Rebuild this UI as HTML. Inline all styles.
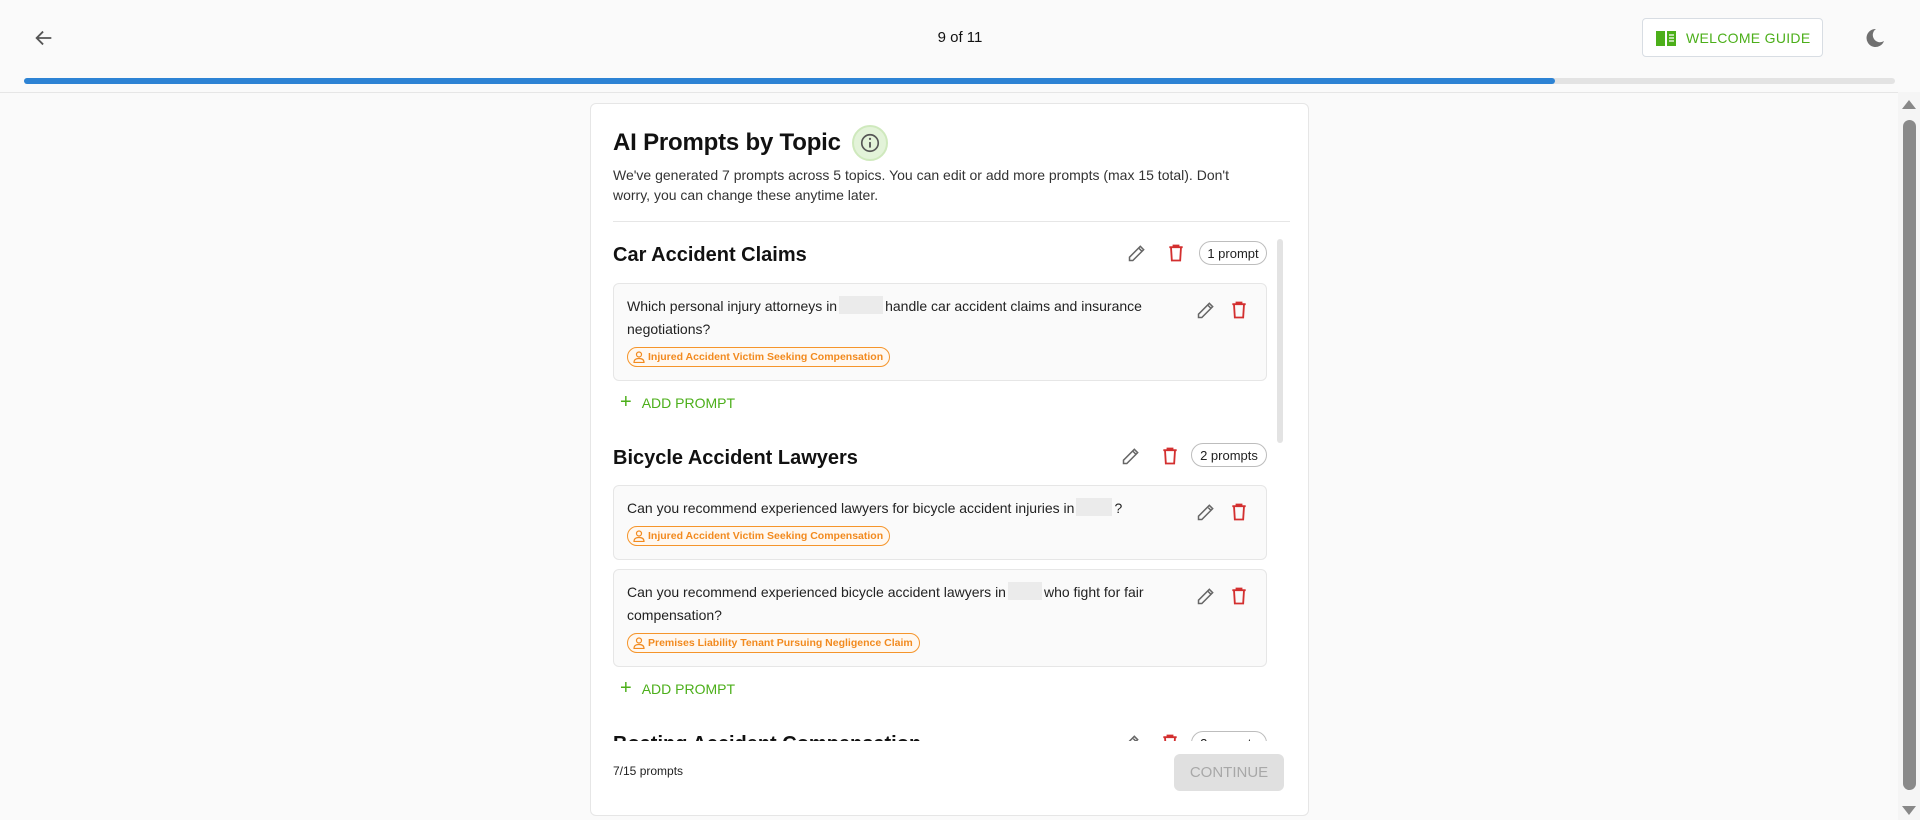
<!DOCTYPE html>
<html><head><meta charset="utf-8"><style>
*{box-sizing:border-box;margin:0;padding:0}
html,body{width:1920px;height:820px;overflow:hidden}
body{background:#fafafa;font-family:"Liberation Sans",Arial,sans-serif;color:#111;position:relative}
.abs{position:absolute}
.hdr-line{left:0;top:92px;width:1898px;height:1px;background:#e6e6e6}
.prog{left:24px;top:78px;width:1871px;height:6px;background:#e3e3e3;border-radius:3px}
.prog i{display:block;width:1531px;height:6px;background:#2d83d4;border-radius:3px}
.wg{left:1642px;top:18px;width:181px;height:39px;border:1px solid #d8dde3;border-radius:4px;background:#fff;color:#4caf1a;font-size:14px;letter-spacing:.3px;display:flex;align-items:center;padding-left:13px;gap:10px}
.card{left:590px;top:103px;width:719px;height:713px;background:#fff;border:1px solid #e6e6e6;border-radius:6px}
h1{position:absolute;left:613px;top:129px;font-size:24px;font-weight:bold;letter-spacing:-.2px}
.desc{left:613px;top:165px;width:645px;font-size:14px;line-height:20px;color:#333}
.hr{left:613px;top:221px;width:677px;height:1px;background:#e6e6e6}
.h2{font-size:20px;font-weight:bold;left:613px}
.badge{border:1px solid #bdbdbd;border-radius:12px;height:24px;font-size:13px;display:flex;align-items:center;justify-content:center;color:#222}
.box{left:613px;width:654px;background:#fafafa;border:1px solid #e6e6e6;border-radius:6px}
.pt{position:absolute;left:13px;top:11px;width:540px;font-size:14px;line-height:23px;color:#222}
.bl{display:inline-block;width:44px;height:18px;background:#ebebeb;vertical-align:-3px;margin:0 2px}
.tag{position:absolute;left:13px;height:20px;border:1px solid #f5952b;border-radius:10px;color:#f28a1e;font-size:10.5px;font-weight:bold;display:flex;align-items:center;padding:0 6px 0 5px;gap:3px;background:#fff8f0}
.add{left:620px;color:#4caf1a;font-size:14px;display:flex;align-items:center;gap:10px}
.add b{font-weight:normal;font-size:20px}
.ic{position:absolute}
</style></head><body>
<svg class="abs" style="left:33px;top:27px" width="22" height="22" viewBox="0 0 24 24"><path d="M20 12H5M11 5l-7 7 7 7" fill="none" stroke="#555" stroke-width="2"/></svg>
<div class="abs" style="left:0;width:1920px;top:29px;text-align:center;font-size:15px">9 of 11</div>
<div class="abs wg"><svg width="20" height="16" viewBox="0 0 20 16"><path d="M0 1h9v15H0zM11 1h9v15h-9z" fill="#4caf1a"/><path d="M13 5h5M13 8h5M13 11h5" stroke="#fff" stroke-width="1.3"/></svg>WELCOME GUIDE</div>
<svg class="abs" style="left:1865px;top:28px" width="20" height="20" viewBox="0 0 20 20"><path d="M11 1a9 9 0 1 0 8 12A7 7 0 0 1 11 1z" fill="#707070"/></svg>
<div class="abs prog"><i></i></div>
<div class="abs hdr-line"></div>
<div class="abs" style="left:1898px;top:92px;width:22px;height:728px;background:#f5f5f5"></div>
<div class="abs" style="left:1903px;top:120px;width:13px;height:670px;background:#8a8a8a;border-radius:7px"></div>
<div class="abs" style="left:1902px;top:100px;border:7px solid transparent;border-bottom:9px solid #888;border-top:0;width:0"></div>
<div class="abs" style="left:1902px;top:806px;border:7px solid transparent;border-top:9px solid #888;border-bottom:0;width:0"></div>

<div class="abs card"></div>
<h1>AI Prompts by Topic</h1>
<div class="abs" style="left:852px;top:125px;width:36px;height:36px;border-radius:50%;background:#e3f3d9;border:2px solid #cfe9bd"></div>
<svg class="abs" style="left:859px;top:132px" width="22" height="22" viewBox="0 0 24 24"><circle cx="12" cy="12" r="9" fill="none" stroke="#555" stroke-width="1.8"/><path d="M12 11v6" stroke="#555" stroke-width="2"/><circle cx="12" cy="7.5" r="1.2" fill="#555"/></svg>
<div class="abs desc">We've generated 7 prompts across 5 topics. You can edit or add more prompts (max 15 total). Don't worry, you can change these anytime later.</div>
<div class="abs hr"></div>

<div class="abs" style="left:596px;top:238px;width:700px;height:503px;overflow:hidden">
<div style="position:absolute;left:-596px;top:-238px;width:1920px;height:820px">
<div class="abs h2" style="top:244px">Car Accident Claims</div>
<svg class="ic" style="left:1127px;top:243px" width="20" height="20" viewBox="0 0 24 24"><path d="M3 21v-4L16 4l4 4L7 21zM14 6l4 4" fill="none" stroke="#666" stroke-width="1.8"/></svg>
<svg class="ic" style="left:1166px;top:243px" width="20" height="20" viewBox="0 0 24 24"><path d="M4 5h16M9 5V3h6v2M6 5l1 16h10l1-16" fill="none" stroke="#d32f2f" stroke-width="2.2"/></svg>
<div class="abs badge" style="left:1199px;top:241px;width:68px">1 prompt</div>
<div class="abs box" style="top:283px;height:98px">
<div class="pt">Which personal injury attorneys in<span class="bl"></span>handle car accident claims and insurance negotiations?</div>
<div class="tag" style="top:63px"><svg width="12" height="12" viewBox="0 0 12 12"><circle cx="6" cy="3.5" r="2.5" fill="none" stroke="#f28a1e" stroke-width="1.2"/><path d="M1 11.5c0-3 2-4 5-4s5 1 5 4z" fill="none" stroke="#f28a1e" stroke-width="1.2"/></svg>Injured Accident Victim Seeking Compensation</div>
</div>
<svg class="ic" style="left:1196px;top:300px" width="20" height="20" viewBox="0 0 24 24"><path d="M3 21v-4L16 4l4 4L7 21zM14 6l4 4" fill="none" stroke="#666" stroke-width="1.8"/></svg>
<svg class="ic" style="left:1229px;top:300px" width="20" height="20" viewBox="0 0 24 24"><path d="M4 5h16M9 5V3h6v2M6 5l1 16h10l1-16" fill="none" stroke="#d32f2f" stroke-width="2.2"/></svg>
<div class="abs add" style="top:391px"><b>+</b>ADD PROMPT</div>

<div class="abs h2" style="top:447px">Bicycle Accident Lawyers</div>
<svg class="ic" style="left:1121px;top:446px" width="20" height="20" viewBox="0 0 24 24"><path d="M3 21v-4L16 4l4 4L7 21zM14 6l4 4" fill="none" stroke="#666" stroke-width="1.8"/></svg>
<svg class="ic" style="left:1160px;top:446px" width="20" height="20" viewBox="0 0 24 24"><path d="M4 5h16M9 5V3h6v2M6 5l1 16h10l1-16" fill="none" stroke="#d32f2f" stroke-width="2.2"/></svg>
<div class="abs badge" style="left:1191px;top:443px;width:76px">2 prompts</div>
<div class="abs box" style="top:485px;height:75px">
<div class="pt">Can you recommend experienced lawyers for bicycle accident injuries in<span class="bl" style="width:36px"></span>?</div>
<div class="tag" style="top:40px"><svg width="12" height="12" viewBox="0 0 12 12"><circle cx="6" cy="3.5" r="2.5" fill="none" stroke="#f28a1e" stroke-width="1.2"/><path d="M1 11.5c0-3 2-4 5-4s5 1 5 4z" fill="none" stroke="#f28a1e" stroke-width="1.2"/></svg>Injured Accident Victim Seeking Compensation</div>
</div>
<svg class="ic" style="left:1196px;top:502px" width="20" height="20" viewBox="0 0 24 24"><path d="M3 21v-4L16 4l4 4L7 21zM14 6l4 4" fill="none" stroke="#666" stroke-width="1.8"/></svg>
<svg class="ic" style="left:1229px;top:502px" width="20" height="20" viewBox="0 0 24 24"><path d="M4 5h16M9 5V3h6v2M6 5l1 16h10l1-16" fill="none" stroke="#d32f2f" stroke-width="2.2"/></svg>
<div class="abs box" style="top:569px;height:98px">
<div class="pt">Can you recommend experienced bicycle accident lawyers in<span class="bl" style="width:34px"></span>who fight for fair compensation?</div>
<div class="tag" style="top:63px"><svg width="12" height="12" viewBox="0 0 12 12"><circle cx="6" cy="3.5" r="2.5" fill="none" stroke="#f28a1e" stroke-width="1.2"/><path d="M1 11.5c0-3 2-4 5-4s5 1 5 4z" fill="none" stroke="#f28a1e" stroke-width="1.2"/></svg>Premises Liability Tenant Pursuing Negligence Claim</div>
</div>
<svg class="ic" style="left:1196px;top:586px" width="20" height="20" viewBox="0 0 24 24"><path d="M3 21v-4L16 4l4 4L7 21zM14 6l4 4" fill="none" stroke="#666" stroke-width="1.8"/></svg>
<svg class="ic" style="left:1229px;top:586px" width="20" height="20" viewBox="0 0 24 24"><path d="M4 5h16M9 5V3h6v2M6 5l1 16h10l1-16" fill="none" stroke="#d32f2f" stroke-width="2.2"/></svg>
<div class="abs add" style="top:677px"><b>+</b>ADD PROMPT</div>

<div class="abs h2" style="top:733px">Boating Accident Compensation</div>
<svg class="ic" style="left:1121px;top:733px" width="20" height="20" viewBox="0 0 24 24"><path d="M3 21v-4L16 4l4 4L7 21zM14 6l4 4" fill="none" stroke="#666" stroke-width="1.8"/></svg>
<svg class="ic" style="left:1160px;top:733px" width="20" height="20" viewBox="0 0 24 24"><path d="M4 5h16M9 5V3h6v2M6 5l1 16h10l1-16" fill="none" stroke="#d32f2f" stroke-width="2.2"/></svg>
<div class="abs badge" style="left:1191px;top:731px;width:76px">2 prompts</div>
<div class="abs" style="left:1277px;top:239px;width:6px;height:204px;background:#e3e3e3;border-radius:3px"></div>
</div></div>

<div class="abs" style="left:613px;top:764px;font-size:12px;color:#222">7/15 prompts</div>
<div class="abs" style="left:1174px;top:754px;width:110px;height:37px;background:#e0e0e0;border-radius:6px;color:#a8a8a8;font-size:15px;display:flex;align-items:center;justify-content:center">CONTINUE</div>
</body></html>
